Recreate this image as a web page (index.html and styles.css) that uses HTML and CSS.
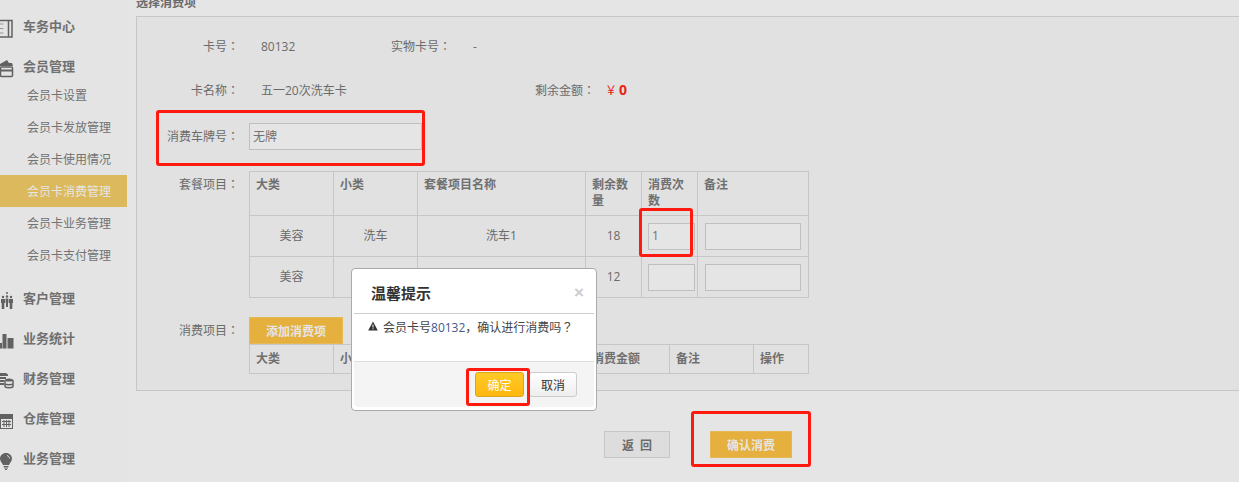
FILE: index.html
```html
<!DOCTYPE html>
<html lang="zh-CN">
<head>
<meta charset="utf-8">
<title>选择消费项</title>
<link rel="stylesheet" href="styles.css">
</head>
<body>
<div class="page">
  <aside class="sidebar">
    <div class="group">
      <div class="group-title">
        <svg class="icon" viewBox="0 0 14 18"><path class="line" d="M-3 2.500H12V19H-3M8.500 2.500V19"/><path class="line thin soft" d="M0 6H3.500M0 10.500H3.500M0 15H3.500"/></svg>
        <span>车务中心</span>
      </div>
    </div>
    <div class="group">
      <div class="group-title">
        <svg class="icon" viewBox="0 0 14 18"><path class="fill" d="M0 6 7 2 9 5H12L13 8H0Z"/><rect class="line" x="0.500" y="9" width="12" height="9.500" rx="1"/><path class="fill" d="M0 11.500H13V13.500H0Z"/></svg>
        <span>会员管理</span>
      </div>
      <ul class="submenu">
        <li>会员卡设置</li>
        <li>会员卡发放管理</li>
        <li>会员卡使用情况</li>
        <li class="active">会员卡消费管理</li>
        <li>会员卡业务管理</li>
        <li>会员卡支付管理</li>
      </ul>
    </div>
    <div class="group">
      <div class="group-title">
        <svg class="icon" viewBox="0 0 14 18"><g class="fill"><circle cx="7" cy="3" r="1"/><circle cx="3" cy="7" r="1.200"/><circle cx="7" cy="6.500" r="1.200"/><circle cx="11" cy="7" r="1.200"/><path d="M1 9H5V13H4.300V19H1.700V13H1ZM5.600 8.500H8.400V13H8V17H6V13H5.600ZM9 9H13V13H12.300V19H9.700V13H9Z"/></g></svg>
        <span>客户管理</span>
      </div>
    </div>
    <div class="group">
      <div class="group-title">
        <svg class="icon" viewBox="0 0 14 18"><path class="fill" d="M0 13H2V18.500H0ZM2.500 4H6.500V18.500H2.500ZM7.500 8H13.500V18.500H7.500Z"/></svg>
        <span>业务统计</span>
      </div>
    </div>
    <div class="group">
      <div class="group-title">
        <svg class="icon" viewBox="0 0 14 18"><path class="fill" d="M0 3H6L8 4.500V6H0ZM0 7H6V9H0ZM0 10H4V12H0ZM0 13H4V15H0Z"/><ellipse class="fill" cx="9" cy="10" rx="4" ry="1.500"/><path class="line" d="M5 10V16.500C5 18 13 18 13 16.500V10M5 13.500C5 15 13 15 13 13.500"/></svg>
        <span>财务管理</span>
      </div>
    </div>
    <div class="group">
      <div class="group-title">
        <svg class="icon" viewBox="0 0 14 18"><path class="fill" d="M0 4H13V19H0ZM1 9V18H12V9Z"/><path class="line thin" d="M2 11.500H11M2 14.500H11M4 10V17M6.500 10V17M9 10V17"/></svg>
        <span>仓库管理</span>
      </div>
    </div>
    <div class="group">
      <div class="group-title">
        <svg class="icon" viewBox="0 0 14 18"><path class="fill" d="M6 3C2.500 3 0 5.500 0 8.500C0 11 1.800 12.500 3 15H9C10.200 12.500 12 11 12 8.500C12 5.500 9.500 3 6 3Z"/><path class="fill" d="M3.500 16H8.500V17H3.500ZM4 17.500H8V18.500H4ZM5 19H7V20H5Z"/><path class="glint" d="M7 5.500C8.500 6 9.500 7 9.500 8.500"/></svg>
        <span>业务管理</span>
      </div>
    </div>
  </aside>

  <main class="main">
    <h2 class="title">选择消费项</h2>
    <section class="panel">
      <div class="row row-first">
        <span class="label">卡号<span class="colon" lang="zh-Hant">：</span></span>
        <span class="value value-short">80132</span>
        <span class="label-auto">实物卡号<span class="colon" lang="zh-Hant">：</span></span>
        <span class="value-tail">-</span>
      </div>
      <div class="row row-second">
        <span class="label">卡名称<span class="colon" lang="zh-Hant">：</span></span>
        <span class="value value-long">五一20次洗车卡</span>
        <span class="label-auto">剩余金额<span class="colon" lang="zh-Hant">：</span></span>
        <span class="money">￥<b>0</b></span>
      </div>
      <div class="row row-plate">
        <span class="label">消费车牌号<span class="colon" lang="zh-Hant">：</span></span>
        <input class="input input-plate" value="无牌">
      </div>
      <div class="row row-table">
        <span class="label label-top">套餐项目<span class="colon" lang="zh-Hant">：</span></span>
        <table class="grid">
          <colgroup><col class="c84"><col class="c84"><col class="c168"><col class="c56"><col class="c56"><col class="c111"></colgroup>
          <thead>
            <tr><th>大类</th><th>小类</th><th>套餐项目名称</th><th>剩余数量</th><th>消费次数</th><th>备注</th></tr>
          </thead>
          <tbody>
            <tr><td>美容</td><td>洗车</td><td>洗车1</td><td>18</td><td><input class="input input-count" value="1"></td><td><input class="input input-note"></td></tr>
            <tr><td>美容</td><td>洗车</td><td>洗车2</td><td>12</td><td><input class="input input-count"></td><td><input class="input input-note"></td></tr>
          </tbody>
        </table>
      </div>
      <div class="row row-items">
        <span class="label label-add">消费项目<span class="colon" lang="zh-Hant">：</span></span>
        <div class="items">
          <button class="btn btn-add" type="button">添加消费项</button>
          <table class="grid grid-items">
            <colgroup><col class="c84"><col class="c84"><col class="c84"><col class="c84"><col class="c84"><col class="c84"><col class="c55"></colgroup>
            <thead>
              <tr><th>大类</th><th>小类</th><th>项目名称</th><th>消费数量</th><th>消费金额</th><th>备注</th><th>操作</th></tr>
            </thead>
          </table>
        </div>
      </div>
    </section>
    <div class="actions">
      <button class="btn btn-back" type="button">返&nbsp;&nbsp;回</button>
      <button class="btn btn-confirm" type="button">确认消费</button>
    </div>
  </main>
</div>

<div class="overlay"></div>

<div class="dialog">
  <div class="dialog-head">
    <h3>温馨提示</h3>
    <span class="close">×</span>
  </div>
  <div class="dialog-body">
    <svg class="warn" viewBox="0 0 10 10"><path d="M5 0.500 9.800 9.500H0.200Z"/><path class="warn-mark" d="M4.500 3.500H5.500V6.500H4.500ZM4.500 7.200H5.500V8.200H4.500Z"/></svg>
    <span>会员卡号<span class="num">80132</span>，确认进行消费吗<span class="colon" lang="zh-Hant">？</span></span>
  </div>
  <div class="dialog-foot">
    <button class="dlg-btn dlg-ok" type="button">确定</button>
    <button class="dlg-btn dlg-cancel" type="button">取消</button>
  </div>
</div>

<div class="mark mark-plate"></div>
<div class="mark mark-count"></div>
<div class="mark mark-ok"></div>
<div class="mark mark-confirm"></div>
</body>
</html>
```

FILE: styles.css
```css
* { box-sizing: border-box; }
html, body { margin: 0; height: 100%; overflow: hidden; }
body {
  background: #fff;
  color: #777;
  font: 12px/20px "Open Sans", "Noto Sans CJK SC", sans-serif;
}
ul { list-style: none; margin: 0; padding: 0; }
h2, h3 { margin: 0; }
button { font-family: inherit; cursor: pointer; }
.colon { font-family: "Noto Sans CJK TC", sans-serif; }

.page { display: flex; height: 482px; overflow: hidden; }

/* sidebar */
.sidebar {
  flex: 0 0 127px;
  padding-top: 15px;
  background: #fefefe;
  display: flex;
  flex-direction: column;
  gap: 16px;
}
.group-title {
  display: flex;
  align-items: center;
  height: 24px;
  line-height: 22px;
  font-size: 13px;
  font-weight: 700;
  color: #7d7d7d;
}
.group-title span { height: 24px; }
.icon { width: 14px; height: 18px; margin-right: 9px; flex: none; overflow: visible; }
.fill { fill: #6e6e6e; }
.line { fill: none; stroke: #6e6e6e; stroke-width: 1.500; }
.line.thin { stroke-width: 1; }
.line.soft { stroke: #aaa; }
.glint { fill: none; stroke: #fff; stroke-width: 1; }
.submenu li { height: 32px; line-height: 33px; padding-left: 27px; color: #808080; }
.submenu li.active { background: #f5cf67; color: #fff; }

/* main */
.main { flex: 1; padding-left: 9px; }
.title { margin-top: -7px; height: 23px; font-size: 12px; line-height: 20px; font-weight: 700; color: #777; }
.panel {
  background: #fbfbfb;
  border: 1px solid #ddd;
  border-right: 0;
  height: 375px;
  padding-top: 19px;
}
.row { display: flex; align-items: center; }
.row-table, .row-items { align-items: flex-start; }
.row-second { margin-top: 23px; }
.row-plate { margin-top: 22px; }
.row-table { margin-top: 21px; }
.row-items { margin-top: 19px; }
.label { width: 102px; margin-right: 10px; text-align: right; flex: none; }
.label-top { margin-top: 3px; }
.label-add { margin-top: 3px; }
.value { padding-left: 12px; flex: none; }
.value-short { width: 142px; }
.value-long { width: 286px; }
.label-auto { flex: none; }
.value-tail { margin-left: 22px; }
.money { margin-left: 10px; color: #ff2a1a; }
.money b { font-size: 14px; margin-left: 2px; }

.input {
  height: 27px;
  border: 1px solid #d5d5d5;
  background: #fff;
  color: #808080;
  font: 12px "Open Sans", "Noto Sans CJK SC", sans-serif;
  padding: 0 3px 2px;
}
.input-plate { width: 173px; }
.input-count { width: 47px; display: block; margin-left: 6px; }
.input-note { width: 96px; display: block; margin-left: 7px; }

.grid { width: 559px; border-collapse: collapse; table-layout: fixed; }
.grid th, .grid td { border: 1px solid #ddd; padding: 0; }
.grid th { padding: 5px 6px; line-height: 16px; height: 44px; font-weight: 700; color: #7d7d7d; text-align: left; vertical-align: top; }
.grid td { height: 41px; text-align: center; }
.grid-items th { height: 29px; line-height: 19px; padding: 4px 6px; }
.c84 { width: 84px; }
.c168 { width: 168px; }
.c56 { width: 56px; }
.c55 { width: 55px; }
.c111 { width: 111px; }

.btn { border: 1px solid; font-weight: 700; font-size: 12px; padding: 0; }
.btn-add {
  display: block;
  width: 94px;
  height: 27px;
  background: #ffc446;
  border-color: #ffd060;
  color: #fff;
}
.actions { display: flex; gap: 40px; margin: 40px 0 0 468px; }
.btn-back { width: 66px; height: 27px; background: #f7f7f7; border-color: #ddd; color: #777; }
.btn-confirm { width: 82px; height: 27px; background: #ffc446; border-color: #ffd060; color: #fff; }

/* overlay + dialog */
.overlay { position: fixed; inset: 0; background: rgba(0, 0, 0, .1); }
.dialog {
  position: absolute;
  left: 351px;
  top: 268px;
  width: 246px;
  height: 143px;
  padding: 0 2px 3px;
  background: #fff;
  border: 1px solid #aaa;
  border-radius: 4px;
  display: flex;
  flex-direction: column;
  color: #444;
}
.dialog-head {
  display: flex;
  justify-content: space-between;
  align-items: center;
  height: 45px;
  padding: 3px 10px 0 17px;
  border-bottom: 1px solid #ccc;
}
.dialog-head h3 { font-size: 15px; font-weight: 700; color: #333; }
.close { font: 700 17px "Liberation Sans", sans-serif; color: #ccc; }
.dialog-body {
  display: flex;
  align-items: flex-start;
  gap: 5px;
  height: 47px;
  padding: 3px 0 0 14px;
}
.warn { width: 10px; height: 10px; margin-top: 4px; flex: none; fill: #333; }
.warn-mark { fill: #fff; }
.num { color: #445a8c; }
.dialog-foot {
  flex: 1;
  display: flex;
  gap: 5px;
  justify-content: flex-end;
  align-items: flex-start;
  padding: 10px 17px 0 0;
  background: #f4f4f4;
  border-top: 1px solid #ddd;
  border-radius: 0 0 4px 4px;
}
.dlg-btn { height: 25px; border: 1px solid; border-radius: 3px; font-size: 12px; padding: 0; }
.dlg-ok { width: 49px; background: linear-gradient(#ffc926, #ffb80f); border-color: #d9a520; color: #fff; }
.dlg-cancel { width: 48px; background: linear-gradient(#fff, #eee); border-color: #ccc; color: #333; }

/* red annotation frames drawn on top of the screenshot */
.mark { position: absolute; border: 3px solid #ff1a0f; border-radius: 3px; }
.mark-plate { left: 156px; top: 110px; width: 269px; height: 56px; }
.mark-count { left: 639px; top: 208px; width: 54px; height: 49px; }
.mark-ok { left: 466px; top: 368px; width: 64px; height: 38px; }
.mark-confirm { left: 691px; top: 411px; width: 120px; height: 56px; }
```
